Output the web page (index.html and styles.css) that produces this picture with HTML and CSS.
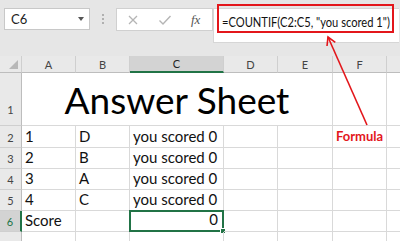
FILE: index.html
```html
<!DOCTYPE html>
<html>
<head>
<meta charset="utf-8">
<link rel="stylesheet" href="styles.css">
</head>
<body>
<div class="app">
  <div class="toolbar">
    <div class="namebox"><span>C6</span><span class="caret"></span></div>
    <div class="grip"><i></i><i></i><i></i></div>
    <div class="fxbox">
      <svg class="ico" width="12" height="12" viewBox="0 0 12 12"><path d="M2 2 L10 10 M10 2 L2 10" stroke="#b5b5b5" stroke-width="1.3" fill="none"/></svg>
      <svg class="ico" width="14" height="12" viewBox="0 0 14 12"><path d="M1.5 6.5 L5 10 L12.5 2" stroke="#b5b5b5" stroke-width="1.4" fill="none"/></svg>
      <span class="fx">fx</span>
    </div>
    <div class="formula"><span class="ftext">=COUNTIF(C2:C5, "you scored 1")</span></div>
  </div>
  <div class="sheet">
    <div class="hd corner"><span class="tri"></span></div>
    <div class="hd">A</div><div class="hd">B</div><div class="hd sel-col">C</div><div class="hd">D</div><div class="hd">E</div><div class="hd">F</div><div class="hd"></div>

    <div class="rh tall">1</div>
    <div class="c title">Answer Sheet</div>
    <div class="c tall"></div><div class="c tall"></div>

    <div class="rh">2</div><div class="c">1</div><div class="c">D</div><div class="c">you scored 0</div><div class="c"></div><div class="c"></div><div class="c note">Formula</div><div class="c"></div>
    <div class="rh">3</div><div class="c">2</div><div class="c">B</div><div class="c">you scored 0</div><div class="c"></div><div class="c"></div><div class="c"></div><div class="c"></div>
    <div class="rh">4</div><div class="c">3</div><div class="c">A</div><div class="c">you scored 0</div><div class="c"></div><div class="c"></div><div class="c"></div><div class="c"></div>
    <div class="rh">5</div><div class="c">4</div><div class="c">C</div><div class="c">you scored 0</div><div class="c"></div><div class="c"></div><div class="c"></div><div class="c"></div>
    <div class="rh sel-row">6</div><div class="c">Score</div><div class="c"></div><div class="c num active">0<span class="handle"></span></div><div class="c"></div><div class="c"></div><div class="c"></div><div class="c"></div>
    <div class="rh"></div><div class="c"></div><div class="c"></div><div class="c"></div><div class="c"></div><div class="c"></div><div class="c"></div><div class="c"></div>
  </div>

  <div class="highlight"></div>
  <svg class="arrow" width="400" height="241" viewBox="0 0 400 241">
    <path d="M328 37 L367 125" stroke="#e3161b" stroke-width="1.6" fill="none"/>
    <path d="M327 46 L328 37 L335.3 42.3" stroke="#e3161b" stroke-width="1.6" fill="none" stroke-linejoin="miter"/>
  </svg>
</div>
</body>
</html>
```
FILE: styles.css
```css
* { box-sizing: border-box; }
html, body { margin: 0; padding: 0; }
body {
  width: 400px;
  height: 241px;
  overflow: hidden;
  background: #e6e6e6;
  font-family: Lato, "Open Sans", sans-serif;
}
.app { position: relative; width: 400px; height: 241px; overflow: hidden; }

.toolbar {
  display: flex;
  align-items: flex-start;
  height: 56px;
  padding: 8px 0 0 4px;
}
.namebox {
  width: 86px;
  height: 22px;
  background: #fff;
  border: 1px solid #c8c8c8;
  display: flex;
  align-items: center;
  justify-content: space-between;
  padding: 0 5px 0 6px;
  font-size: 13px;
  color: #222;
}
.caret {
  width: 0; height: 0;
  border-left: 3.5px solid transparent;
  border-right: 3.5px solid transparent;
  border-top: 4px solid #555;
}
.grip {
  width: 26px;
  height: 22px;
  display: flex;
  flex-direction: column;
  align-items: center;
  justify-content: center;
  gap: 2px;
}
.grip i { width: 2px; height: 2px; background: #b0b0b0; display: block; }
.fxbox {
  width: 97px;
  height: 23px;
  background: #fff;
  border: 1px solid #d0d0d0;
  display: flex;
  align-items: center;
  padding-left: 10px;
  gap: 19px;
}
.fx {
  font-family: "Liberation Serif", serif;
  font-style: italic;
  font-size: 13px;
  color: #555;
}
.formula {
  width: 186px;
  height: 35px;
  background: #fff;
  border: 1px solid #d6d6d6;
  border-right: none;
  padding: 3px 0 0 8px;
  font-size: 13.5px;
  color: #111;
  white-space: nowrap;
  line-height: 20px;
  overflow: hidden;
}
.ftext {
  display: inline-block;
  transform: scaleX(0.825);
  transform-origin: left center;
}

.sheet {
  display: grid;
  grid-template-columns: 22px 54px 54px 94px 54px 55px 54px 54px;
  grid-template-rows: 17px 53px 22px 21px 21px 21px 21px 21px;
  background: #fff;
}
.hd {
  background: #e9e9e9;
  border-right: 1px solid #cfcfcf;
  border-bottom: 1px solid #bdbdbd;
  font-size: 11px;
  color: #444;
  display: flex;
  align-items: center;
  justify-content: center;
}
.hd.sel-col { background: #d3d3d3; border-bottom: 2px solid #217346; color: #222; }
.corner { position: relative; }
.tri {
  position: absolute;
  right: 3px; bottom: 3px;
  width: 0; height: 0;
  border-left: 9px solid transparent;
  border-bottom: 9px solid #b8b8b8;
}
.rh {
  background: #e9e9e9;
  border-right: 1px solid #bdbdbd;
  border-bottom: 1px solid #cfcfcf;
  font-size: 11px;
  color: #444;
  display: flex;
  align-items: flex-end;
  justify-content: center;
  padding-bottom: 3px;
}
.rh.tall { padding-bottom: 9px; }
.rh.sel-row { background: #d3d3d3; border-right: 2px solid #217346; color: #217346; }
.c {
  border-right: 1px solid #d9d9d9;
  border-bottom: 1px solid #d9d9d9;
  font-size: 15px;
  color: #111;
  display: flex;
  align-items: flex-end;
  padding: 0 0 2px 3px;
  white-space: nowrap;
  line-height: 18px;
  position: relative;
}
.title {
  grid-column: 2 / 7;
  justify-content: center;
  font-size: 37px;
  line-height: 44px;
  padding: 0 0 3px 0;
  color: #000;
}
.note {
  justify-content: center;
  padding-left: 0;
  color: #e3161b;
  font-weight: bold;
  font-size: 13px;
}
.num { justify-content: flex-end; padding-right: 4px; }
.active {
  border: 2px solid #217346;
  margin: -1px 0 0 -1px;
}
.handle {
  position: absolute;
  right: -4px; bottom: -4px;
  width: 6px; height: 6px;
  background: #217346;
  border: 1px solid #fff;
}
.highlight {
  position: absolute;
  left: 217px; top: 4px;
  width: 177px; height: 29px;
  border: 2px solid #e3161b;
}
.arrow { position: absolute; left: 0; top: 0; pointer-events: none; }
```
